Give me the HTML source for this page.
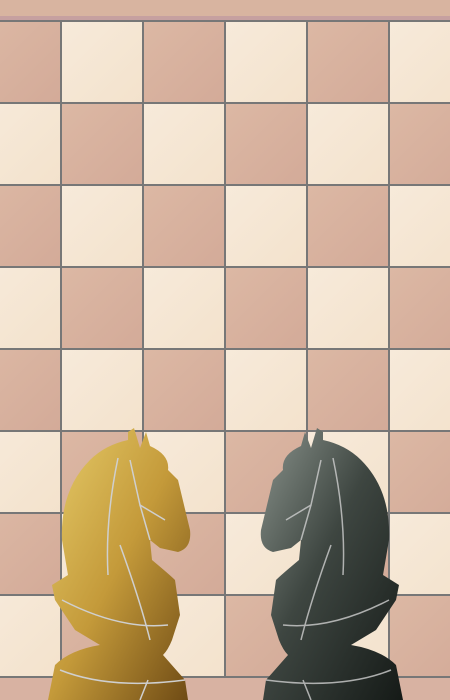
<!DOCTYPE html>
<html><head><meta charset="utf-8"><style>
html,body{margin:0;padding:0;width:450px;height:700px;overflow:hidden;background:#d8b4a0;}
svg{display:block}
</style></head><body>
<svg width="450" height="700" viewBox="0 0 450 700" xmlns="http://www.w3.org/2000/svg">
<defs>
<linearGradient id="dk" x1="0" y1="0" x2="1" y2="1"><stop offset="0" stop-color="#dcb8a4"/><stop offset="1" stop-color="#d3aa98"/></linearGradient>
<linearGradient id="lt" x1="0" y1="0" x2="1" y2="1"><stop offset="0" stop-color="#f7eada"/><stop offset="1" stop-color="#f3e2cc"/></linearGradient>
<pattern id="board" x="-20" y="22" width="164" height="164" patternUnits="userSpaceOnUse">
<rect x="0" y="0" width="82" height="82" fill="url(#dk)"/>
<rect x="82" y="0" width="82" height="82" fill="url(#lt)"/>
<rect x="0" y="82" width="82" height="82" fill="url(#lt)"/>
<rect x="82" y="82" width="82" height="82" fill="url(#dk)"/>
</pattern>
<linearGradient id="gold" x1="0" y1="0" x2="1" y2="1"><stop offset="0" stop-color="#e6cc6a"/><stop offset="0.5" stop-color="#c49a3a"/><stop offset="1" stop-color="#6e4a14"/></linearGradient>
<linearGradient id="blk" x1="1" y1="0" x2="0" y2="1"><stop offset="0" stop-color="#8a938c"/><stop offset="0.45" stop-color="#3e4641"/><stop offset="1" stop-color="#151a17"/></linearGradient>
<path id="kn" d="M128,432 L134,428 L140,448 L146,432 L150,446 Q170,455 168,470 L178,480 L190,530 Q192,548 178,552 L160,548 L150,540 L152,560 Q170,575 175,580 L180,615 L172,640 Q168,650 163,655 L185,680 L188,700 L48,700 L55,665 Q70,650 100,645 L75,630 L55,600 L52,585 L68,575 L62,540 Q60,490 90,460 Q105,445 128,440 Z"/>
<g id="lines" fill="none" stroke="#cfcfcf" stroke-width="1.5">
<path d="M118,458 Q105,520 108,575"/><path d="M130,460 L140,505 L165,520"/><path d="M140,505 L150,540"/><path d="M120,545 Q140,600 150,640"/><path d="M62,600 Q120,630 168,625"/><path d="M60,670 Q110,690 185,680"/><path d="M148,680 L140,700"/>
</g>
</defs>
<rect width="450" height="700" fill="#d8b4a0"/>
<rect x="0" y="16" width="450" height="5" fill="#c6a0a0"/>
<rect x="0" y="21" width="450" height="657" fill="url(#board)"/>
<g fill="#777">
<rect x="60" y="21" width="2" height="657"/><rect x="142" y="21" width="2" height="657"/><rect x="224" y="21" width="2" height="657"/><rect x="306" y="21" width="2" height="657"/><rect x="388" y="21" width="2" height="657"/>
<rect x="0" y="20" width="450" height="2"/><rect x="0" y="102" width="450" height="2"/><rect x="0" y="184" width="450" height="2"/><rect x="0" y="266" width="450" height="2"/><rect x="0" y="348" width="450" height="2"/><rect x="0" y="430" width="450" height="2"/><rect x="0" y="512" width="450" height="2"/><rect x="0" y="594" width="450" height="2"/><rect x="0" y="676" width="450" height="2"/>
</g>
<rect x="0" y="678" width="450" height="22" fill="#d8b2a2"/>
<use href="#kn" fill="url(#gold)"/>
<use href="#lines"/>
<g transform="translate(451,0) scale(-1,1)">
<use href="#kn" fill="url(#blk)"/>
<use href="#lines" opacity="0.8"/>
</g>
</svg>
</body></html>
